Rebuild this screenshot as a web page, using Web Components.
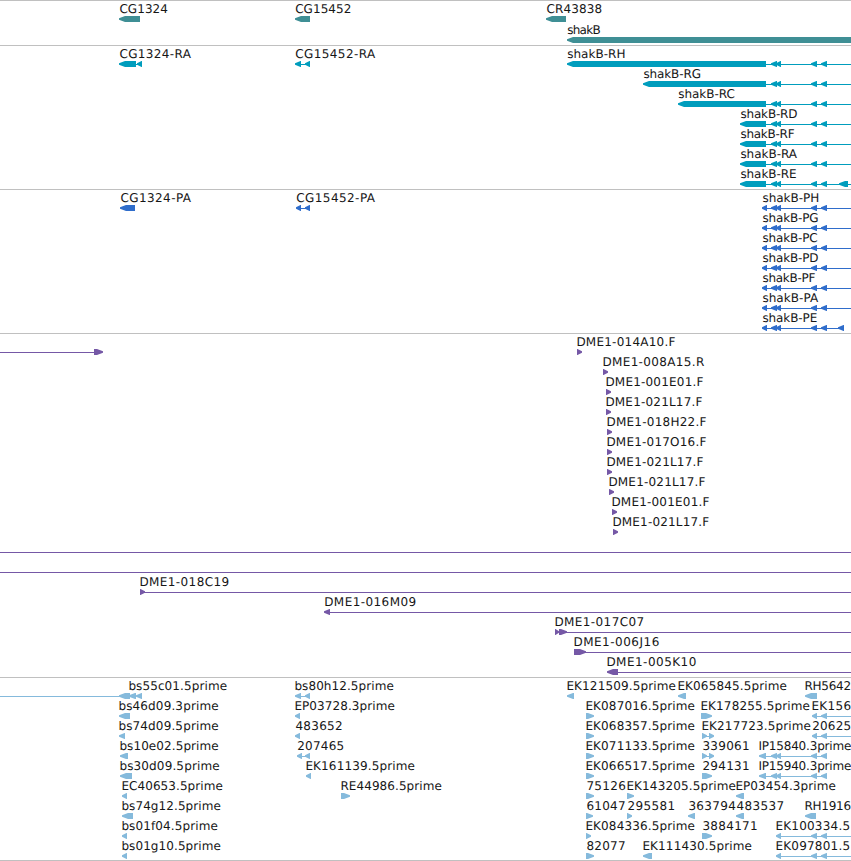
<!DOCTYPE html>
<html lang="en">
<head>
<meta charset="utf-8">
<title>Genome tracks</title>
<style>
html,body{margin:0;background:#fff}
body{width:851px;height:861px;overflow:hidden}
</style>
</head>
<body>
<genome-browser></genome-browser>
<script>
const FONT = '12px "DejaVu Sans", "Noto Sans", sans-serif';
const pen = document.createElement('canvas').getContext('2d');
pen.font = FONT;

// One sequence label: its ink runs from attribute "from" to attribute "to".
class FeatureLabel extends HTMLElement {
  connectedCallback() {
    const root = this.attachShadow({mode: 'open'});
    const text = this.textContent;
    const m = pen.measureText(text);
    const from = +this.getAttribute('from') - 0.3, to = +this.getAttribute('to');
    const ink = m.actualBoundingBoxRight + m.actualBoundingBoxLeft;
    const gap = (to - from - ink) / (text.length - 1);
    root.innerHTML = `<style>
      :host{position:absolute;top:-2px;left:${from + m.actualBoundingBoxLeft}px;
        font:${FONT};line-height:18px;white-space:pre;color:#161616;
        letter-spacing:${gap.toFixed(3)}px;text-rendering:geometricPrecision}
    </style><slot></slot>`;
  }
}
customElements.define('feature-label', FeatureLabel);

// Directional boxes (L, R) and intron lines (-) of one row.
class FeatureGlyphs extends HTMLElement {
  connectedCallback() {
    const root = this.attachShadow({mode: 'open'});
    const shapes = this.getAttribute('shapes').trim().split(/\s+/).filter(Boolean).map(s => {
      const k = s[0], [a, b] = s.slice(1).split(',').map(Number);
      const h = Math.min(b - a - 0.5, 6);
      if (k === '-') return `<rect x="${a}" y="3" width="${b - a}" height="1"/>`;
      if (k === 'L') return `<path d="M${a} 2.3L${a + h} 0H${b}V6H${a + h}L${a} 3.7Z"/>`;
      return `<path d="M${b} 2.3L${b - h} 0H${a}V6H${b - h}L${b} 3.7Z"/>`;
    }).join('');
    root.innerHTML = `<style>
      :host{display:block;padding-top:14px}
      svg{display:block;fill:var(--feature-color)}
    </style><svg width="851" height="6">${shapes}</svg>`;
  }
}
customElements.define('feature-glyphs', FeatureGlyphs);

class TrackRow extends HTMLElement {
  connectedCallback() {
    this.attachShadow({mode: 'open'}).innerHTML = `<style>
      :host{display:block;position:relative;height:20px}
    </style><slot></slot>`;
  }
}
customElements.define('track-row', TrackRow);

class GenomeTrack extends HTMLElement {
  connectedCallback() {
    this.attachShadow({mode: 'open'}).innerHTML = `<style>
      :host{display:flex;flex-direction:column;gap:var(--row-gap,0);
        border-top:1px solid #c0c0c0;padding:1px 0 2px}
    </style><slot></slot>`;
  }
}
customElements.define('genome-track', GenomeTrack);

const X = ' -766,851 L771,777 L776,781 L811,817 L821,827';
const P = '-766,851 L762,767 L771,777 L776,781 L811,817 L821,827';
const EX = ' -816,851 L812,817 L821,827';
const IP = ' -764,822 L759,766 L771,777 L776,781 L811,817 L821,827';
const EK = ' -780,851 L776,781 L811,817 L821,827';
const tracks = [
  {color: '#3f8f95', gap: '1px', rows: [
    ['L119,140 L295,310 L546,566', ['CG1324',119.7,167.3], ['CG15452',295.5,350.7], ['CR43838',546.7,601.5]],
    ['L567,860', ['shakB',567.5,600.5]]]},
  {color: '#009dbd', rows: [
    ['L119,136 -136,138 L137,142 L295,301 -300,306 L305,310 L567,766' + X, ['CG1324-RA',119.7,191.7], ['CG15452-RA',295.5,376], ['shakB-RH',567.5,624.5]],
    ['L643,766' + X, ['shakB-RG',643.7,700.7]],
    ['L678,766' + X, ['shakB-RC',678.5,734.5]],
    ['L740,766' + X, ['shakB-RD',740.7,797.3]],
    ['L740,766' + X, ['shakB-RF',740.7,794.7]],
    ['L740,766' + X, ['shakB-RA',740.7,797.8]],
    ['L740,766' + X + ' L839,848', ['shakB-RE',740.7,796]]]},
  {color: '#2f6dcb', rows: [
    ['L120,135 L296,301 -300,306 L305,310 ' + P, ['CG1324-PA',120.7,191.8], ['CG15452-PA',296.5,375.8], ['shakB-PH',762.7,818.3]],
    [P, ['shakB-PG',762.7,818.3]],
    [P, ['shakB-PC',762.7,817.3]],
    [P, ['shakB-PD',762.7,818.3]],
    [P, ['shakB-PF',762.7,815.5]],
    [P, ['shakB-PA',762.7,819]],
    [P.replace('851','840') + ' L838,844', ['shakB-PE',762.7,816.7]]]},
  {color: '#7558a6', rows: [
    ['-0,94 R94,103 R577,582', ['DME1-014A10.F',577.7,675.5]],
    ['R603,608', ['DME1-008A15.R',603.7,704]],
    ['R606,611', ['DME1-001E01.F',606.7,703.5]],
    ['R606,611', ['DME1-021L17.F',606.7,702.5]],
    ['R607,612', ['DME1-018H22.F',607.7,706.5]],
    ['R607,612', ['DME1-017O16.F',607.7,706.5]],
    ['R607,612', ['DME1-021L17.F',607.7,703.5]],
    ['R609,614', ['DME1-021L17.F',609.7,705.5]],
    ['R612,617', ['DME1-001E01.F',612.7,709.5]],
    ['R613,618', ['DME1-021L17.F',613.7,709.3]],
    ['-0,851'],
    ['-0,851'],
    ['R140,145 -144,851', ['DME1-018C19',140.7,228.5]],
    ['L324,330 -330,851', ['DME1-016M09',325.5,415.5]],
    ['R555,559 R559,567 -566,851', ['DME1-017C07',555.7,643.5]],
    ['R574,586 -585,851', ['DME1-006J16',574.7,658.7]],
    ['L607,618 -618,851', ['DME1-005K10',607.7,695.7]]]},
  {color: '#85badc', rows: [
    ['-0,121 L119,130 L129,136 L136,142 L295,301 -300,306 L305,310 L567,574 L678,686 L805,817', ['bs55c01.5prime',129.7,226.7], ['bs80h12.5prime',295.7,393.5], ['EK121509.5prime',567.7,675.5], ['EK065845.5prime',678.7,786.5], ['RH5642',805.7,850.5]],
    ['L119,130 L295,300 R586,594 R701,712' + EX, ['bs46d09.3prime',119.7,218.3], ['EP03728.3prime',295.7,394.5], ['EK087016.5prime',586.7,694.5], ['EK178255.5prime',701.7,809.5], ['EK156',812.7,850.5]],
    ['L119,125 L295,300 R586,594 R702,707 -706,710 R709,714' + EX, ['bs74d09.5prime',119.7,218.3], ['483652',295.7,342], ['EK068357.5prime',586.7,694.5], ['EK217723.5prime',702.7,810.5], ['20625',812.5,850.5]],
    ['L120,128 L297,302 -301,306 L305,310 R586,594 R702,707 -706,710 R709,714' + IP, ['bs10e02.5prime',120.7,218.3], ['207465',297.5,343.5], ['EK071133.5prime',586.7,694.5], ['339061',702.7,749], ['IP15840.3prime',759.7,851]],
    ['L120,132 L306,311 R586,594 R702,712' + IP, ['bs30d09.5prime',120.7,219.3], ['EK161139.5prime',306.7,414.5], ['EK066517.5prime',586.7,694.5], ['294131',702.7,749], ['IP15940.3prime',759.7,851]],
    ['L122,127 R341,350 R586,594 R627,634 L736,744', ['EC40653.5prime',122.7,222.5], ['RE44986.5prime',341.7,441.5], ['75126',586.7,625.2], ['EK143205.5prime',627.7,735.5], ['EP03454.3prime',736.7,835.5]],
    ['L122,133 R586,593 R627,632 L688,695 L736,744 L805,816', ['bs74g12.5prime',122.7,220.5], ['61047',586.7,625], ['295581',627.7,674.5], ['363794',688.7,735.3], ['483537',736.7,783.5], ['RH1916',805.7,850.5]],
    ['L122,127 R586,591 R702,712' + EK, ['bs01f04.5prime',122.7,217.5], ['EK084336.5prime',586.7,694.5], ['3884171',702.7,757], ['EK100334.5',776.7,849.5]],
    ['L122,127 R586,594 L643,652' + EK, ['bs01g10.5prime',122.7,220.5], ['82077',586.7,625], ['EK111430.5prime',643.7,751.5], ['EK097801.5',776.7,849.5]]]}
];

class GenomeBrowser extends HTMLElement {
  connectedCallback() {
    this.attachShadow({mode: 'open'}).innerHTML = `<style>
      :host{display:block;width:851px;height:860px;overflow:hidden;border-bottom:1px solid #c0c0c0}
    </style>` + tracks.map(t => `<genome-track style="--feature-color:${t.color};--row-gap:${t.gap || '0'}">` +
      t.rows.map(([shapes, ...labels]) => `<track-row><feature-glyphs shapes="${shapes}"></feature-glyphs>` +
        labels.map(([s, a, b]) => `<feature-label from="${a}" to="${b}">${s}</feature-label>`).join('') +
        '</track-row>').join('') + '</genome-track>').join('');
  }
}
customElements.define('genome-browser', GenomeBrowser);
</script>
</body>
</html>
